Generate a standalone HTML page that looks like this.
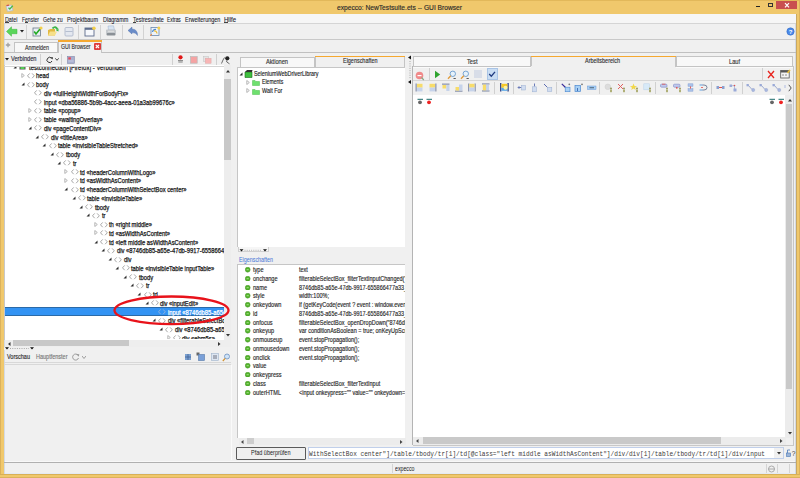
<!DOCTYPE html><html><head><meta charset="utf-8"><style>
html,body{margin:0;padding:0;}
body{width:800px;height:478px;overflow:hidden;position:relative;background:#f0f0f0;font-family:"Liberation Sans",sans-serif;}
div,svg{position:absolute;}
.t{white-space:nowrap;transform-origin:0 50%;}
.clip{overflow:hidden;}
</style></head><body>
<div style="left:0px;top:0px;width:800px;height:478px;background:#f0c86c"></div>
<div style="left:0px;top:0px;width:800px;height:1px;background:#e2b85a"></div>
<div style="left:0px;top:0px;width:1px;height:478px;background:#dcb25c"></div>
<div style="left:799px;top:0px;width:1px;height:478px;background:#dcb25c"></div>
<div style="left:0px;top:477px;width:800px;height:1px;background:#dcb25c"></div>
<div style="left:3.5px;top:14px;width:1px;height:460px;background:#c8a864"></div>
<div style="left:795.5px;top:14px;width:1px;height:460px;background:#c8a864"></div>
<div style="left:4px;top:14px;width:792px;height:460px;background:#d4dae4"></div>
<div style="left:5px;top:14px;width:790px;height:459px;background:#f0f0f0"></div>
<div class="t" style="left:337.00px;top:2.50px;line-height:10px;font-size:7.2px;font-family:'Liberation Sans';font-weight:normal;color:#2a2a2a;transform:scaleX(0.9258);-webkit-text-stroke:0.15px #2a2a2a;">expecco: NewTestsuite.ets -- GUI Browser</div>
<svg style="left:4.5px;top:2.5px" width="10" height="10" viewBox="0 0 10 10"><path d="M1 3 L6.5 2 L8 7.5 L2.5 8.5 Z" fill="#dfe9f3" stroke="#a8b8c8" stroke-width="0.6"/><path d="M1.5 2.6 L4 2.1" stroke="#d05050" stroke-width="1.2"/><path d="M3.5 4.8 L4.8 6 L7.8 2.8" stroke="#48b848" stroke-width="1.3" fill="none"/></svg>
<div style="left:756px;top:5.8px;width:4px;height:1.2px;background:#222"></div>
<div style="left:767.8px;top:3.2px;width:5.2px;height:3.9px;border:0.7px solid #333;border-top-width:1.3px;box-sizing:border-box"></div>
<div style="left:776.4px;top:0.6px;width:20.2px;height:8.8px;background:#c9504f"></div>
<svg style="left:782.5px;top:1.9px" width="8" height="7" viewBox="0 0 8 7"><path d="M2 1.2 L6 5.4 M6 1.2 L2 5.4" stroke="#fff" stroke-width="1.2"/></svg>
<div style="left:4px;top:14px;width:792px;height:9.5px;background:#f6f6f6"></div>
<div style="left:4px;top:23.2px;width:792px;height:1px;background:#d5d5d5"></div>
<div class="t" style="left:5.00px;top:14.60px;line-height:10px;font-size:7.8px;font-family:'Liberation Sans';font-weight:normal;color:#1a1a2a;transform:scaleX(0.6867);-webkit-text-stroke:0.12px #1a1a2a;">Datei</div>
<div class="t" style="left:21.90px;top:14.60px;line-height:10px;font-size:7.8px;font-family:'Liberation Sans';font-weight:normal;color:#1a1a2a;transform:scaleX(0.6430);-webkit-text-stroke:0.12px #1a1a2a;">Fenster</div>
<div class="t" style="left:43.40px;top:14.60px;line-height:10px;font-size:7.8px;font-family:'Liberation Sans';font-weight:normal;color:#1a1a2a;transform:scaleX(0.6648);-webkit-text-stroke:0.12px #1a1a2a;">Gehe zu</div>
<div class="t" style="left:67.00px;top:14.60px;line-height:10px;font-size:7.8px;font-family:'Liberation Sans';font-weight:normal;color:#1a1a2a;transform:scaleX(0.7081);-webkit-text-stroke:0.12px #1a1a2a;">Projektbaum</div>
<div class="t" style="left:102.50px;top:14.60px;line-height:10px;font-size:7.8px;font-family:'Liberation Sans';font-weight:normal;color:#1a1a2a;transform:scaleX(0.7034);-webkit-text-stroke:0.12px #1a1a2a;">Diagramm</div>
<div class="t" style="left:132.60px;top:14.60px;line-height:10px;font-size:7.8px;font-family:'Liberation Sans';font-weight:normal;color:#1a1a2a;transform:scaleX(0.6943);-webkit-text-stroke:0.12px #1a1a2a;">Testresultate</div>
<div class="t" style="left:167.00px;top:14.60px;line-height:10px;font-size:7.8px;font-family:'Liberation Sans';font-weight:normal;color:#1a1a2a;transform:scaleX(0.6242);-webkit-text-stroke:0.12px #1a1a2a;">Extras</div>
<div class="t" style="left:184.80px;top:14.60px;line-height:10px;font-size:7.8px;font-family:'Liberation Sans';font-weight:normal;color:#1a1a2a;transform:scaleX(0.7040);-webkit-text-stroke:0.12px #1a1a2a;">Erweiterungen</div>
<div class="t" style="left:224.00px;top:14.60px;line-height:10px;font-size:7.8px;font-family:'Liberation Sans';font-weight:normal;color:#1a1a2a;transform:scaleX(0.7688);-webkit-text-stroke:0.12px #1a1a2a;">Hilfe</div>
<div style="left:5.2px;top:21.6px;width:3.5px;height:0.7px;background:#444"></div>
<div style="left:25.3px;top:21.6px;width:3px;height:0.7px;background:#444"></div>
<div style="left:132.8px;top:21.6px;width:3.5px;height:0.7px;background:#444"></div>
<div style="left:224.3px;top:21.6px;width:3.8px;height:0.7px;background:#444"></div>
<div style="left:4px;top:39.2px;width:792px;height:1px;background:#c9c9c9"></div>
<div style="left:26.2px;top:25px;width:1px;height:13.5px;background:#d2d2d2"></div>
<div style="left:78.2px;top:25px;width:1px;height:13.5px;background:#d2d2d2"></div>
<div style="left:99.6px;top:25px;width:1px;height:13.5px;background:#d2d2d2"></div>
<div style="left:122.2px;top:25px;width:1px;height:13.5px;background:#d2d2d2"></div>
<div style="left:142.8px;top:25px;width:1px;height:13.5px;background:#d2d2d2"></div>
<svg style="left:6px;top:26px" width="12" height="11" viewBox="0 0 12 11"><path d="M0.5 5.5 L5.5 0.8 L5.5 3.3 L11 3.3 L11 7.7 L5.5 7.7 L5.5 10.2 Z" fill="#5ad65a" stroke="#3cb43c" stroke-width="0.5"/></svg>
<svg style="left:19.5px;top:30px" width="4" height="3" viewBox="0 0 4 3"><path d="M0 0 L4 0 L2 2.5 Z" fill="#222"/></svg>
<svg style="left:32px;top:26px" width="11" height="11" viewBox="0 0 11 11"><rect x="1" y="2" width="7.5" height="8" fill="#e8eef4" stroke="#6b7a8a" stroke-width="0.8"/><path d="M2.2 5.5 L4 8 L8 3" stroke="#22aa22" stroke-width="1.6" fill="none"/><circle cx="9" cy="2" r="1.6" fill="#f3d04a"/></svg>
<svg style="left:47px;top:25px" width="12" height="12" viewBox="0 0 12 12"><path d="M1 5 L3.5 4 L8 4 L8 10.5 L1 10.5 Z" fill="#e2b840"/><path d="M1 10.5 L3 6.5 L10 6.5 L8 10.5 Z" fill="#f6e08a"/><path d="M5.5 3.5 Q8.5 0.5 10.5 4.5" stroke="#3fb54a" stroke-width="1.8" fill="none"/><path d="M9 5.5 L11.5 3.5 L11.5 6.5 Z" fill="#3fb54a"/></svg>
<svg style="left:64px;top:26px" width="10" height="11" viewBox="0 0 10 11"><rect x="1" y="1.5" width="8" height="8.5" rx="1" fill="#e4e8f0" stroke="#aab4c8" stroke-width="0.8"/><path d="M1.5 5.5 H8.5" stroke="#aab4c8" stroke-width="0.8"/></svg>
<svg style="left:84px;top:26px" width="12" height="11" viewBox="0 0 12 11"><rect x="1" y="2" width="9" height="8" fill="#f6f8fc" stroke="#5d6c8c" stroke-width="0.9"/><rect x="1" y="2" width="9" height="1.8" fill="#5d6c8c"/><circle cx="10" cy="2.2" r="1.7" fill="#f3d04a"/></svg>
<svg style="left:105px;top:25px" width="12" height="12" viewBox="0 0 12 12"><path d="M3 1 L8.5 0.8 L9.5 5 L3.5 5 Z" fill="#d8e4f2" stroke="#9ab0cc" stroke-width="0.5"/><path d="M1 5 Q1 4.5 2 4.5 L10 4.5 Q11 4.5 11 6 L11 8.5 L1 8.5 Z" fill="#c4c8cc"/><rect x="1.5" y="8" width="9" height="2.5" rx="1" fill="#8a9096"/><path d="M3 6.3 H9" stroke="#eee" stroke-width="0.7"/></svg>
<svg style="left:127px;top:26px" width="12" height="11" viewBox="0 0 12 11"><path d="M1 4.5 L5 1 L5 3 Q10.5 3 10.5 9.5 Q9 6.5 5 6.5 L5 8 Z" fill="#6a8cc8" stroke="#4a6aa8" stroke-width="0.4"/></svg>
<svg style="left:149px;top:26px" width="12" height="11" viewBox="0 0 12 11"><rect x="2" y="1.5" width="8" height="8" fill="#eef3f8" stroke="#6a88b0" stroke-width="0.8"/><path d="M3.5 6 Q4 3 7 3.5" stroke="#4a8ad0" stroke-width="1.2" fill="none"/><path d="M5 5 Q7.5 4.5 8 7.5" stroke="#e8b830" stroke-width="1.2" fill="none"/><circle cx="9.8" cy="2" r="1.5" fill="#f3d04a"/><path d="M1 9.5 L3 8.5" stroke="#f08030" stroke-width="1"/></svg>
<svg style="left:785.5px;top:26.5px" width="9" height="9" viewBox="0 0 9 9"><circle cx="4.5" cy="4.5" r="3.7" fill="#4a88e8" stroke="#2f68c0" stroke-width="0.5"/><text x="4.5" y="6.9" font-size="6" font-family="Liberation Sans" font-weight="bold" fill="#fff" text-anchor="middle">?</text></svg>
<div style="left:4px;top:52.3px;width:792px;height:1px;background:#c0c0c0"></div>
<svg style="left:5.3px;top:42.3px" width="6" height="6" viewBox="0 0 6 6"><path d="M3 0.8 V5.2 M0.8 3 H5.2" stroke="#a0a0a0" stroke-width="1.3"/></svg>
<div style="left:14px;top:42.2px;width:44px;height:10.2px;background:#f8f8f8;border:1px solid #c4c4c4;border-bottom:none;box-sizing:border-box"></div>
<div class="t" style="left:24.50px;top:42.50px;line-height:10px;font-size:7px;font-family:'Liberation Sans';font-weight:normal;color:#333;transform:scaleX(0.7611);-webkit-text-stroke:0.15px #333;">Anmelden</div>
<div style="left:58px;top:40px;width:43.5px;height:13.3px;background:#f0f0f0;border-left:1px solid #c4c4c4;border-right:1px solid #c4c4c4;box-sizing:border-box"></div>
<div style="left:58px;top:40px;width:43.5px;height:1.5px;background:#f5a830"></div>
<div class="t" style="left:61.00px;top:41.60px;line-height:10px;font-size:7px;font-family:'Liberation Sans';font-weight:normal;color:#333;transform:scaleX(0.7363);-webkit-text-stroke:0.15px #333;">GUI Browser</div>
<div style="left:94px;top:43px;width:6.5px;height:6.5px;background:#dd3b3b;border-radius:1px"></div>
<svg style="left:94px;top:43px" width="7" height="7" viewBox="0 0 7 7"><path d="M1.8 1.8 L5 5 M5 1.8 L1.8 5" stroke="#fff" stroke-width="1.1"/></svg>
<svg style="left:4.5px;top:57.8px" width="4" height="3" viewBox="0 0 4 3"><path d="M0 0 L4 0 L2 2.5 Z" fill="#222"/></svg>
<div class="t" style="left:10.50px;top:54.30px;line-height:10px;font-size:7px;font-family:'Liberation Sans';font-weight:normal;color:#2a2a3a;transform:scaleX(0.8087);-webkit-text-stroke:0.15px #2a2a3a;">Verbinden</div>
<div style="left:40px;top:54px;width:1px;height:10.5px;background:#d0d0d0"></div>
<svg style="left:45.5px;top:55.5px" width="8" height="8" viewBox="0 0 8 8"><path d="M5.6 2.3 A2.6 2.6 0 1 0 6 5" stroke="#333" stroke-width="1" fill="none"/><path d="M4.3 1.2 L7 1.2 L6.6 3.6 Z" fill="#333"/></svg>
<svg style="left:54.5px;top:58px" width="4" height="3" viewBox="0 0 4 3"><path d="M0.3 0.3 L2 2.3 L3.7 0.3" stroke="#333" stroke-width="0.9" fill="none"/></svg>
<div style="left:61px;top:54px;width:1px;height:10.5px;background:#d0d0d0"></div>
<svg style="left:66.8px;top:55.8px" width="8" height="8" viewBox="0 0 8 8"><rect x="0.5" y="0.5" width="6.8" height="6.8" fill="#a8b0d0" stroke="#8088a8" stroke-width="0.6"/><rect x="1.3" y="1.3" width="2.6" height="2.2" fill="#e84858"/><path d="M1.3 5 H6.5" stroke="#dde" stroke-width="0.6"/></svg>
<div style="left:172.3px;top:54px;width:1px;height:10.5px;background:#d0d0d0"></div>
<svg style="left:177px;top:54px" width="8" height="10" viewBox="0 0 8 10"><circle cx="3.5" cy="3.3" r="2.1" fill="#e01818"/><path d="M1 6.6 H6 M1.3 8 H5.7" stroke="#777" stroke-width="0.9"/></svg>
<svg style="left:190px;top:55.5px" width="8" height="8" viewBox="0 0 8 8"><rect x="0.6" y="0.6" width="6.6" height="6.6" fill="#f5a3a3" stroke="#b9b9b9" stroke-width="0.7"/></svg>
<svg style="left:202.5px;top:55.5px" width="9" height="8" viewBox="0 0 9 8"><rect x="0.5" y="0.5" width="5" height="5" fill="#e4e4e4" stroke="#c0c0c0" stroke-width="0.5"/><rect x="2.3" y="2.3" width="5.8" height="5" fill="#f8b5b5" stroke="#d8a0a0" stroke-width="0.4"/></svg>
<div style="left:215.5px;top:54px;width:1px;height:10.5px;background:#d0d0d0"></div>
<svg style="left:219.5px;top:54.5px" width="11" height="10" viewBox="0 0 11 10"><path d="M1.5 8.5 L3 5 L4.5 2.5" stroke="#333" stroke-width="0.7" fill="none"/><circle cx="7.3" cy="3.3" r="2.1" fill="#222"/><path d="M6.5 5.5 L6.8 7 L9.5 8.8" stroke="#333" stroke-width="0.7" fill="none"/></svg>
<div style="left:4px;top:65px;width:227px;height:274.5px;background:#fff;border-left:1px solid #c8c8c8;box-sizing:border-box"></div>
<div style="left:4px;top:65.8px;width:220px;height:1px;background:#d4d4d4"></div>
<div class="clip" style="left:5px;top:66.6px;width:219px;height:272.9px">
<svg style="left:8.2px;top:-1.8999999999999915px" width="4" height="4" viewBox="0 0 4 4"><path d="M3.5 0.5 L3.5 3.5 L0.5 3.5 Z" fill="#333"/></svg>
<svg style="left:14px;top:-2.8999999999999915px" width="7" height="6" viewBox="0 0 7 6"><rect x="0.5" y="0.5" width="6" height="5" fill="#555"/><rect x="1.5" y="2" width="4" height="3" fill="#5c5"/></svg>
<div class="t" style="left:24.00px;top:-4.00px;line-height:10px;font-size:7px;font-family:'Liberation Sans';font-weight:normal;color:#141414;transform:scaleX(0.8580);-webkit-text-stroke:0.25px #141414;">testconnection [Firefox] - Verbunden</div>
<svg style="left:15.5px;top:6.3500000000000085px" width="4" height="5" viewBox="0 0 4 5"><path d="M0.8 0.5 L3.3 2.5 L0.8 4.5 Z" fill="none" stroke="#9a9a9a" stroke-width="0.7"/></svg>
<svg style="left:21.699999999999996px;top:6.250000000000014px" width="8" height="6" viewBox="0 0 8 6"><path d="M2.7 0.4 L0.5 2.8 L2.7 5.2 M5.1 0.4 L7.3 2.8 L5.1 5.2" fill="none" stroke="#8a8a8a" stroke-width="0.75"/></svg>
<div class="t" style="left:31.30px;top:4.75px;line-height:10px;font-size:7px;font-family:'Liberation Sans';font-weight:normal;color:#141414;transform:scaleX(0.8300);-webkit-text-stroke:0.25px #141414;">head</div>
<svg style="left:15.5px;top:15.600000000000009px" width="4" height="4" viewBox="0 0 4 4"><path d="M3.5 0.5 L3.5 3.5 L0.5 3.5 Z" fill="#2a2a2a"/></svg>
<svg style="left:21.699999999999996px;top:15.000000000000014px" width="8" height="6" viewBox="0 0 8 6"><path d="M2.7 0.4 L0.5 2.8 L2.7 5.2 M5.1 0.4 L7.3 2.8 L5.1 5.2" fill="none" stroke="#8a8a8a" stroke-width="0.75"/></svg>
<div class="t" style="left:31.30px;top:13.50px;line-height:10px;font-size:7px;font-family:'Liberation Sans';font-weight:normal;color:#141414;transform:scaleX(0.8300);-webkit-text-stroke:0.25px #141414;">body</div>
<svg style="left:29.0px;top:23.750000000000014px" width="8" height="6" viewBox="0 0 8 6"><path d="M2.7 0.4 L0.5 2.8 L2.7 5.2 M5.1 0.4 L7.3 2.8 L5.1 5.2" fill="none" stroke="#8a8a8a" stroke-width="0.75"/></svg>
<div class="t" style="left:38.60px;top:22.25px;line-height:10px;font-size:7px;font-family:'Liberation Sans';font-weight:normal;color:#141414;transform:scaleX(0.8300);-webkit-text-stroke:0.25px #141414;">div «fullHeightWidthForBodyFix»</div>
<svg style="left:29.0px;top:32.500000000000014px" width="8" height="6" viewBox="0 0 8 6"><path d="M2.7 0.4 L0.5 2.8 L2.7 5.2 M5.1 0.4 L7.3 2.8 L5.1 5.2" fill="none" stroke="#8a8a8a" stroke-width="0.75"/></svg>
<div class="t" style="left:38.60px;top:31.00px;line-height:10px;font-size:7px;font-family:'Liberation Sans';font-weight:normal;color:#141414;transform:scaleX(0.8300);-webkit-text-stroke:0.25px #141414;">input «dba56886-5b9b-4acc-aeea-01a3ab99676c»</div>
<svg style="left:22.799999999999997px;top:41.35000000000001px" width="4" height="5" viewBox="0 0 4 5"><path d="M0.8 0.5 L3.3 2.5 L0.8 4.5 Z" fill="none" stroke="#9a9a9a" stroke-width="0.7"/></svg>
<svg style="left:29.0px;top:41.250000000000014px" width="8" height="6" viewBox="0 0 8 6"><path d="M2.7 0.4 L0.5 2.8 L2.7 5.2 M5.1 0.4 L7.3 2.8 L5.1 5.2" fill="none" stroke="#8a8a8a" stroke-width="0.75"/></svg>
<div class="t" style="left:38.60px;top:39.75px;line-height:10px;font-size:7px;font-family:'Liberation Sans';font-weight:normal;color:#141414;transform:scaleX(0.8300);-webkit-text-stroke:0.25px #141414;">table «popup»</div>
<svg style="left:22.799999999999997px;top:50.10000000000001px" width="4" height="5" viewBox="0 0 4 5"><path d="M0.8 0.5 L3.3 2.5 L0.8 4.5 Z" fill="none" stroke="#9a9a9a" stroke-width="0.7"/></svg>
<svg style="left:29.0px;top:50.000000000000014px" width="8" height="6" viewBox="0 0 8 6"><path d="M2.7 0.4 L0.5 2.8 L2.7 5.2 M5.1 0.4 L7.3 2.8 L5.1 5.2" fill="none" stroke="#8a8a8a" stroke-width="0.75"/></svg>
<div class="t" style="left:38.60px;top:48.50px;line-height:10px;font-size:7px;font-family:'Liberation Sans';font-weight:normal;color:#141414;transform:scaleX(0.8300);-webkit-text-stroke:0.25px #141414;">table «waitingOverlay»</div>
<svg style="left:22.799999999999997px;top:59.35000000000001px" width="4" height="4" viewBox="0 0 4 4"><path d="M3.5 0.5 L3.5 3.5 L0.5 3.5 Z" fill="#2a2a2a"/></svg>
<svg style="left:29.0px;top:58.750000000000014px" width="8" height="6" viewBox="0 0 8 6"><path d="M2.7 0.4 L0.5 2.8 L2.7 5.2 M5.1 0.4 L7.3 2.8 L5.1 5.2" fill="none" stroke="#8a8a8a" stroke-width="0.75"/></svg>
<div class="t" style="left:38.60px;top:57.25px;line-height:10px;font-size:7px;font-family:'Liberation Sans';font-weight:normal;color:#141414;transform:scaleX(0.8300);-webkit-text-stroke:0.25px #141414;">div «pageContentDiv»</div>
<svg style="left:30.099999999999994px;top:68.1px" width="4" height="4" viewBox="0 0 4 4"><path d="M3.5 0.5 L3.5 3.5 L0.5 3.5 Z" fill="#2a2a2a"/></svg>
<svg style="left:36.3px;top:67.5px" width="8" height="6" viewBox="0 0 8 6"><path d="M2.7 0.4 L0.5 2.8 L2.7 5.2 M5.1 0.4 L7.3 2.8 L5.1 5.2" fill="none" stroke="#8a8a8a" stroke-width="0.75"/></svg>
<div class="t" style="left:45.90px;top:66.00px;line-height:10px;font-size:7px;font-family:'Liberation Sans';font-weight:normal;color:#141414;transform:scaleX(0.8300);-webkit-text-stroke:0.25px #141414;">div «titleArea»</div>
<svg style="left:37.4px;top:76.85px" width="4" height="4" viewBox="0 0 4 4"><path d="M3.5 0.5 L3.5 3.5 L0.5 3.5 Z" fill="#2a2a2a"/></svg>
<svg style="left:43.6px;top:76.25px" width="8" height="6" viewBox="0 0 8 6"><path d="M2.7 0.4 L0.5 2.8 L2.7 5.2 M5.1 0.4 L7.3 2.8 L5.1 5.2" fill="none" stroke="#8a8a8a" stroke-width="0.75"/></svg>
<div class="t" style="left:53.20px;top:74.75px;line-height:10px;font-size:7px;font-family:'Liberation Sans';font-weight:normal;color:#141414;transform:scaleX(0.8300);-webkit-text-stroke:0.25px #141414;">table «invisibleTableStretched»</div>
<svg style="left:44.7px;top:85.6px" width="4" height="4" viewBox="0 0 4 4"><path d="M3.5 0.5 L3.5 3.5 L0.5 3.5 Z" fill="#2a2a2a"/></svg>
<svg style="left:50.9px;top:85.0px" width="8" height="6" viewBox="0 0 8 6"><path d="M2.7 0.4 L0.5 2.8 L2.7 5.2 M5.1 0.4 L7.3 2.8 L5.1 5.2" fill="none" stroke="#8a8a8a" stroke-width="0.75"/></svg>
<div class="t" style="left:60.50px;top:83.50px;line-height:10px;font-size:7px;font-family:'Liberation Sans';font-weight:normal;color:#141414;transform:scaleX(0.8300);-webkit-text-stroke:0.25px #141414;">tbody</div>
<svg style="left:52.0px;top:94.35px" width="4" height="4" viewBox="0 0 4 4"><path d="M3.5 0.5 L3.5 3.5 L0.5 3.5 Z" fill="#2a2a2a"/></svg>
<svg style="left:58.199999999999996px;top:93.75px" width="8" height="6" viewBox="0 0 8 6"><path d="M2.7 0.4 L0.5 2.8 L2.7 5.2 M5.1 0.4 L7.3 2.8 L5.1 5.2" fill="none" stroke="#8a8a8a" stroke-width="0.75"/></svg>
<div class="t" style="left:67.80px;top:92.25px;line-height:10px;font-size:7px;font-family:'Liberation Sans';font-weight:normal;color:#141414;transform:scaleX(0.8300);-webkit-text-stroke:0.25px #141414;">tr</div>
<svg style="left:59.3px;top:102.6px" width="4" height="5" viewBox="0 0 4 5"><path d="M0.8 0.5 L3.3 2.5 L0.8 4.5 Z" fill="none" stroke="#9a9a9a" stroke-width="0.7"/></svg>
<svg style="left:65.5px;top:102.5px" width="8" height="6" viewBox="0 0 8 6"><path d="M2.7 0.4 L0.5 2.8 L2.7 5.2 M5.1 0.4 L7.3 2.8 L5.1 5.2" fill="none" stroke="#8a8a8a" stroke-width="0.75"/></svg>
<div class="t" style="left:75.10px;top:101.00px;line-height:10px;font-size:7px;font-family:'Liberation Sans';font-weight:normal;color:#141414;transform:scaleX(0.8300);-webkit-text-stroke:0.25px #141414;">td «headerColumnWithLogo»</div>
<svg style="left:59.3px;top:111.35px" width="4" height="5" viewBox="0 0 4 5"><path d="M0.8 0.5 L3.3 2.5 L0.8 4.5 Z" fill="none" stroke="#9a9a9a" stroke-width="0.7"/></svg>
<svg style="left:65.5px;top:111.25px" width="8" height="6" viewBox="0 0 8 6"><path d="M2.7 0.4 L0.5 2.8 L2.7 5.2 M5.1 0.4 L7.3 2.8 L5.1 5.2" fill="none" stroke="#8a8a8a" stroke-width="0.75"/></svg>
<div class="t" style="left:75.10px;top:109.75px;line-height:10px;font-size:7px;font-family:'Liberation Sans';font-weight:normal;color:#141414;transform:scaleX(0.8300);-webkit-text-stroke:0.25px #141414;">td «asWidthAsContent»</div>
<svg style="left:59.3px;top:120.6px" width="4" height="4" viewBox="0 0 4 4"><path d="M3.5 0.5 L3.5 3.5 L0.5 3.5 Z" fill="#2a2a2a"/></svg>
<svg style="left:65.5px;top:120.0px" width="8" height="6" viewBox="0 0 8 6"><path d="M2.7 0.4 L0.5 2.8 L2.7 5.2 M5.1 0.4 L7.3 2.8 L5.1 5.2" fill="none" stroke="#8a8a8a" stroke-width="0.75"/></svg>
<div class="t" style="left:75.10px;top:118.50px;line-height:10px;font-size:7px;font-family:'Liberation Sans';font-weight:normal;color:#141414;transform:scaleX(0.8300);-webkit-text-stroke:0.25px #141414;">td «headerColumnWithSelectBox center»</div>
<svg style="left:66.6px;top:129.35px" width="4" height="4" viewBox="0 0 4 4"><path d="M3.5 0.5 L3.5 3.5 L0.5 3.5 Z" fill="#2a2a2a"/></svg>
<svg style="left:72.80000000000001px;top:128.75px" width="8" height="6" viewBox="0 0 8 6"><path d="M2.7 0.4 L0.5 2.8 L2.7 5.2 M5.1 0.4 L7.3 2.8 L5.1 5.2" fill="none" stroke="#8a8a8a" stroke-width="0.75"/></svg>
<div class="t" style="left:82.40px;top:127.25px;line-height:10px;font-size:7px;font-family:'Liberation Sans';font-weight:normal;color:#141414;transform:scaleX(0.8300);-webkit-text-stroke:0.25px #141414;">table «invisibleTable»</div>
<svg style="left:73.9px;top:138.1px" width="4" height="4" viewBox="0 0 4 4"><path d="M3.5 0.5 L3.5 3.5 L0.5 3.5 Z" fill="#2a2a2a"/></svg>
<svg style="left:80.10000000000001px;top:137.5px" width="8" height="6" viewBox="0 0 8 6"><path d="M2.7 0.4 L0.5 2.8 L2.7 5.2 M5.1 0.4 L7.3 2.8 L5.1 5.2" fill="none" stroke="#8a8a8a" stroke-width="0.75"/></svg>
<div class="t" style="left:89.70px;top:136.00px;line-height:10px;font-size:7px;font-family:'Liberation Sans';font-weight:normal;color:#141414;transform:scaleX(0.8300);-webkit-text-stroke:0.25px #141414;">tbody</div>
<svg style="left:81.2px;top:146.85px" width="4" height="4" viewBox="0 0 4 4"><path d="M3.5 0.5 L3.5 3.5 L0.5 3.5 Z" fill="#2a2a2a"/></svg>
<svg style="left:87.4px;top:146.25px" width="8" height="6" viewBox="0 0 8 6"><path d="M2.7 0.4 L0.5 2.8 L2.7 5.2 M5.1 0.4 L7.3 2.8 L5.1 5.2" fill="none" stroke="#8a8a8a" stroke-width="0.75"/></svg>
<div class="t" style="left:97.00px;top:144.75px;line-height:10px;font-size:7px;font-family:'Liberation Sans';font-weight:normal;color:#141414;transform:scaleX(0.8300);-webkit-text-stroke:0.25px #141414;">tr</div>
<svg style="left:88.5px;top:155.1px" width="4" height="5" viewBox="0 0 4 5"><path d="M0.8 0.5 L3.3 2.5 L0.8 4.5 Z" fill="none" stroke="#9a9a9a" stroke-width="0.7"/></svg>
<svg style="left:94.7px;top:155.0px" width="8" height="6" viewBox="0 0 8 6"><path d="M2.7 0.4 L0.5 2.8 L2.7 5.2 M5.1 0.4 L7.3 2.8 L5.1 5.2" fill="none" stroke="#8a8a8a" stroke-width="0.75"/></svg>
<div class="t" style="left:104.30px;top:153.50px;line-height:10px;font-size:7px;font-family:'Liberation Sans';font-weight:normal;color:#141414;transform:scaleX(0.8300);-webkit-text-stroke:0.25px #141414;">th «right middle»</div>
<svg style="left:88.5px;top:163.85px" width="4" height="5" viewBox="0 0 4 5"><path d="M0.8 0.5 L3.3 2.5 L0.8 4.5 Z" fill="none" stroke="#9a9a9a" stroke-width="0.7"/></svg>
<svg style="left:94.7px;top:163.75px" width="8" height="6" viewBox="0 0 8 6"><path d="M2.7 0.4 L0.5 2.8 L2.7 5.2 M5.1 0.4 L7.3 2.8 L5.1 5.2" fill="none" stroke="#8a8a8a" stroke-width="0.75"/></svg>
<div class="t" style="left:104.30px;top:162.25px;line-height:10px;font-size:7px;font-family:'Liberation Sans';font-weight:normal;color:#141414;transform:scaleX(0.8300);-webkit-text-stroke:0.25px #141414;">td «asWidthAsContent»</div>
<svg style="left:88.5px;top:173.1px" width="4" height="4" viewBox="0 0 4 4"><path d="M3.5 0.5 L3.5 3.5 L0.5 3.5 Z" fill="#2a2a2a"/></svg>
<svg style="left:94.7px;top:172.5px" width="8" height="6" viewBox="0 0 8 6"><path d="M2.7 0.4 L0.5 2.8 L2.7 5.2 M5.1 0.4 L7.3 2.8 L5.1 5.2" fill="none" stroke="#8a8a8a" stroke-width="0.75"/></svg>
<div class="t" style="left:104.30px;top:171.00px;line-height:10px;font-size:7px;font-family:'Liberation Sans';font-weight:normal;color:#141414;transform:scaleX(0.8300);-webkit-text-stroke:0.25px #141414;">td «left middle asWidthAsContent»</div>
<svg style="left:95.8px;top:181.85px" width="4" height="4" viewBox="0 0 4 4"><path d="M3.5 0.5 L3.5 3.5 L0.5 3.5 Z" fill="#2a2a2a"/></svg>
<svg style="left:102.0px;top:181.25px" width="8" height="6" viewBox="0 0 8 6"><path d="M2.7 0.4 L0.5 2.8 L2.7 5.2 M5.1 0.4 L7.3 2.8 L5.1 5.2" fill="none" stroke="#8a8a8a" stroke-width="0.75"/></svg>
<div class="t" style="left:111.60px;top:179.75px;line-height:10px;font-size:7px;font-family:'Liberation Sans';font-weight:normal;color:#141414;transform:scaleX(0.8300);-webkit-text-stroke:0.25px #141414;">div «8746db85-a65e-47db-9917-655866477a33_filterableSelectBox»</div>
<svg style="left:103.1px;top:190.6px" width="4" height="4" viewBox="0 0 4 4"><path d="M3.5 0.5 L3.5 3.5 L0.5 3.5 Z" fill="#2a2a2a"/></svg>
<svg style="left:109.3px;top:189.99999999999997px" width="8" height="6" viewBox="0 0 8 6"><path d="M2.7 0.4 L0.5 2.8 L2.7 5.2 M5.1 0.4 L7.3 2.8 L5.1 5.2" fill="none" stroke="#8a8a8a" stroke-width="0.75"/></svg>
<div class="t" style="left:118.90px;top:188.50px;line-height:10px;font-size:7px;font-family:'Liberation Sans';font-weight:normal;color:#141414;transform:scaleX(0.8300);-webkit-text-stroke:0.25px #141414;">div</div>
<svg style="left:110.4px;top:199.35px" width="4" height="4" viewBox="0 0 4 4"><path d="M3.5 0.5 L3.5 3.5 L0.5 3.5 Z" fill="#2a2a2a"/></svg>
<svg style="left:116.6px;top:198.74999999999997px" width="8" height="6" viewBox="0 0 8 6"><path d="M2.7 0.4 L0.5 2.8 L2.7 5.2 M5.1 0.4 L7.3 2.8 L5.1 5.2" fill="none" stroke="#8a8a8a" stroke-width="0.75"/></svg>
<div class="t" style="left:126.20px;top:197.25px;line-height:10px;font-size:7px;font-family:'Liberation Sans';font-weight:normal;color:#141414;transform:scaleX(0.8300);-webkit-text-stroke:0.25px #141414;">table «invisibleTable inputTable»</div>
<svg style="left:117.7px;top:208.1px" width="4" height="4" viewBox="0 0 4 4"><path d="M3.5 0.5 L3.5 3.5 L0.5 3.5 Z" fill="#2a2a2a"/></svg>
<svg style="left:123.9px;top:207.49999999999997px" width="8" height="6" viewBox="0 0 8 6"><path d="M2.7 0.4 L0.5 2.8 L2.7 5.2 M5.1 0.4 L7.3 2.8 L5.1 5.2" fill="none" stroke="#8a8a8a" stroke-width="0.75"/></svg>
<div class="t" style="left:133.50px;top:206.00px;line-height:10px;font-size:7px;font-family:'Liberation Sans';font-weight:normal;color:#141414;transform:scaleX(0.8300);-webkit-text-stroke:0.25px #141414;">tbody</div>
<svg style="left:125.0px;top:216.85px" width="4" height="4" viewBox="0 0 4 4"><path d="M3.5 0.5 L3.5 3.5 L0.5 3.5 Z" fill="#2a2a2a"/></svg>
<svg style="left:131.20000000000002px;top:216.24999999999997px" width="8" height="6" viewBox="0 0 8 6"><path d="M2.7 0.4 L0.5 2.8 L2.7 5.2 M5.1 0.4 L7.3 2.8 L5.1 5.2" fill="none" stroke="#8a8a8a" stroke-width="0.75"/></svg>
<div class="t" style="left:140.80px;top:214.75px;line-height:10px;font-size:7px;font-family:'Liberation Sans';font-weight:normal;color:#141414;transform:scaleX(0.8300);-webkit-text-stroke:0.25px #141414;">tr</div>
<svg style="left:132.29999999999998px;top:225.6px" width="4" height="4" viewBox="0 0 4 4"><path d="M3.5 0.5 L3.5 3.5 L0.5 3.5 Z" fill="#2a2a2a"/></svg>
<svg style="left:138.5px;top:224.99999999999997px" width="8" height="6" viewBox="0 0 8 6"><path d="M2.7 0.4 L0.5 2.8 L2.7 5.2 M5.1 0.4 L7.3 2.8 L5.1 5.2" fill="none" stroke="#8a8a8a" stroke-width="0.75"/></svg>
<div class="t" style="left:148.10px;top:223.50px;line-height:10px;font-size:7px;font-family:'Liberation Sans';font-weight:normal;color:#141414;transform:scaleX(0.8300);-webkit-text-stroke:0.25px #141414;">td</div>
<svg style="left:139.6px;top:234.35px" width="4" height="4" viewBox="0 0 4 4"><path d="M3.5 0.5 L3.5 3.5 L0.5 3.5 Z" fill="#2a2a2a"/></svg>
<svg style="left:145.8px;top:233.74999999999997px" width="8" height="6" viewBox="0 0 8 6"><path d="M2.7 0.4 L0.5 2.8 L2.7 5.2 M5.1 0.4 L7.3 2.8 L5.1 5.2" fill="none" stroke="#8a8a8a" stroke-width="0.75"/></svg>
<div class="t" style="left:155.40px;top:232.25px;line-height:10px;font-size:7px;font-family:'Liberation Sans';font-weight:normal;color:#141414;transform:scaleX(0.8300);-webkit-text-stroke:0.25px #141414;">div «inputEdit»</div>
<div style="left:0px;top:240.4px;width:219px;height:9px;background:#3393f3;border-top:1px solid #2b6aa8;border-bottom:1px solid #2b6aa8;box-sizing:border-box"></div>
<svg style="left:153.1px;top:242.49999999999997px" width="8" height="6" viewBox="0 0 8 6"><path d="M2.7 0.4 L0.5 2.8 L2.7 5.2 M5.1 0.4 L7.3 2.8 L5.1 5.2" fill="none" stroke="#a8bcd8" stroke-width="0.75"/></svg>
<div class="t" style="left:162.70px;top:241.00px;line-height:10px;font-size:7px;font-family:'Liberation Sans';font-weight:normal;color:#fff;transform:scaleX(0.8300);-webkit-text-stroke:0.25px #fff;">input «8746db85-a65e-47db»</div>
<svg style="left:146.89999999999998px;top:251.85px" width="4" height="4" viewBox="0 0 4 4"><path d="M3.5 0.5 L3.5 3.5 L0.5 3.5 Z" fill="#2a2a2a"/></svg>
<svg style="left:153.1px;top:251.24999999999997px" width="8" height="6" viewBox="0 0 8 6"><path d="M2.7 0.4 L0.5 2.8 L2.7 5.2 M5.1 0.4 L7.3 2.8 L5.1 5.2" fill="none" stroke="#8a8a8a" stroke-width="0.75"/></svg>
<div class="t" style="left:162.70px;top:249.75px;line-height:10px;font-size:7px;font-family:'Liberation Sans';font-weight:normal;color:#141414;transform:scaleX(0.8300);-webkit-text-stroke:0.25px #141414;">div «filterableSelectBox»</div>
<svg style="left:154.2px;top:260.6px" width="4" height="4" viewBox="0 0 4 4"><path d="M3.5 0.5 L3.5 3.5 L0.5 3.5 Z" fill="#2a2a2a"/></svg>
<svg style="left:160.4px;top:260.0px" width="8" height="6" viewBox="0 0 8 6"><path d="M2.7 0.4 L0.5 2.8 L2.7 5.2 M5.1 0.4 L7.3 2.8 L5.1 5.2" fill="none" stroke="#8a8a8a" stroke-width="0.75"/></svg>
<div class="t" style="left:170.00px;top:258.50px;line-height:10px;font-size:7px;font-family:'Liberation Sans';font-weight:normal;color:#141414;transform:scaleX(0.8300);-webkit-text-stroke:0.25px #141414;">div «8746db85-a65e»</div>
<svg style="left:161.49999999999997px;top:268.85px" width="4" height="5" viewBox="0 0 4 5"><path d="M0.8 0.5 L3.3 2.5 L0.8 4.5 Z" fill="none" stroke="#9a9a9a" stroke-width="0.7"/></svg>
<svg style="left:167.7px;top:268.75px" width="8" height="6" viewBox="0 0 8 6"><path d="M2.7 0.4 L0.5 2.8 L2.7 5.2 M5.1 0.4 L7.3 2.8 L5.1 5.2" fill="none" stroke="#8a8a8a" stroke-width="0.75"/></svg>
<div class="t" style="left:177.30px;top:267.25px;line-height:10px;font-size:7px;font-family:'Liberation Sans';font-weight:normal;color:#141414;transform:scaleX(0.8300);-webkit-text-stroke:0.25px #141414;">div «ehm5s»</div>
</div>
<div style="left:223.5px;top:65px;width:7.5px;height:274.5px;background:#ededed"></div>
<svg style="left:225.5px;top:69.5px" width="4" height="3" viewBox="0 0 4 3"><path d="M0 2.5 L4 2.5 L2 0 Z" fill="#333"/></svg>
<div style="left:224px;top:79.3px;width:7px;height:80.7px;background:#c8c8c8"></div>
<svg style="left:225.5px;top:333.5px" width="4" height="3" viewBox="0 0 4 3"><path d="M0 0 L4 0 L2 2.5 Z" fill="#333"/></svg>
<div style="left:5px;top:339.5px;width:226px;height:7px;background:#eeeeee"></div>
<svg style="left:8px;top:341.5px" width="3" height="4" viewBox="0 0 3 4"><path d="M2.5 0 L2.5 4 L0 2 Z" fill="#333"/></svg>
<div style="left:13px;top:339.8px;width:116px;height:6.4px;background:#c8c8c8"></div>
<svg style="left:218px;top:341.5px" width="3" height="4" viewBox="0 0 3 4"><path d="M0 0 L0 4 L2.5 2 Z" fill="#333"/></svg>
<div style="left:4px;top:346.5px;width:227px;height:3.5px;background:#f0f0f0"></div>
<svg style="left:5px;top:347px" width="31" height="3" viewBox="0 0 31 3"><path d="M0 0.3 L4 0.3 L2 2.5 Z M25 0.3 L29 0.3 L27 2.5 Z" fill="#111"/><path d="M5 1.5 H24" stroke="#888" stroke-width="0.7" stroke-dasharray="1 1.3"/></svg>
<div class="t" style="left:7.00px;top:351.60px;line-height:10px;font-size:7px;font-family:'Liberation Sans';font-weight:normal;color:#2a2a2a;transform:scaleX(0.7880);-webkit-text-stroke:0.15px #2a2a2a;">Vorschau</div>
<div class="t" style="left:35.50px;top:351.60px;line-height:10px;font-size:7px;font-family:'Liberation Sans';font-weight:normal;color:#777;transform:scaleX(0.7857);-webkit-text-stroke:0.15px #777;">Hauptfenster</div>
<svg style="left:72px;top:353px" width="8" height="8" viewBox="0 0 8 8"><path d="M6 2.2 A3 3 0 1 0 6.5 5" stroke="#999" stroke-width="1" fill="none"/><path d="M4.5 1 L7.3 1.2 L6.7 3.8 Z" fill="#999"/></svg>
<svg style="left:81.5px;top:355.5px" width="4" height="3" viewBox="0 0 4 3"><path d="M0 0 L2 2.5 L4 0" stroke="#888" stroke-width="0.8" fill="none"/></svg>
<svg style="left:183.5px;top:353px" width="8" height="8" viewBox="0 0 8 8"><rect x="1" y="1" width="6" height="6" fill="#7ba0d0"/><path d="M4 1 V7 M1 4 H7" stroke="#3a5a90" stroke-width="0.7"/></svg>
<svg style="left:196px;top:352px" width="10" height="10" viewBox="0 0 10 10"><rect x="0.5" y="0.5" width="3" height="3" fill="#666"/><rect x="2.5" y="2.5" width="6" height="6" fill="#7aa0d8" stroke="#5578a8" stroke-width="0.6"/></svg>
<svg style="left:210.5px;top:353px" width="8" height="8" viewBox="0 0 8 8"><rect x="0.5" y="0.5" width="7" height="7" fill="#dde6f2" stroke="#9fb2cc" stroke-width="0.6"/><path d="M3 2 V6 M5 2 V6" stroke="#445" stroke-width="0.7"/></svg>
<svg style="left:222px;top:352.5px" width="9" height="9" viewBox="0 0 9 9"><circle cx="5" cy="3.5" r="2.5" fill="#cfe3f7" stroke="#6a8fc0" stroke-width="0.8"/><path d="M3.2 5.3 L0.8 8" stroke="#d09030" stroke-width="1.2"/></svg>
<div style="left:4px;top:362.2px;width:227px;height:1px;background:#d8d8d8"></div>
<div style="left:4px;top:364.2px;width:227px;height:1px;background:#d8d8d8"></div>
<div style="left:231.3px;top:365px;width:1px;height:95px;background:#fafafa"></div>
<svg style="left:100px;top:285px" width="140" height="50" viewBox="0 0 140 50"><ellipse cx="71.5" cy="25.3" rx="57" ry="13.8" fill="none" stroke="#e8121a" stroke-width="2.3"/></svg>
<div style="left:239.5px;top:57.2px;width:75px;height:9.5px;background:#f8f8f8;border:1px solid #c4c4c4;border-bottom:none;box-sizing:border-box"></div>
<div class="t" style="left:266.00px;top:56.80px;line-height:10px;font-size:7px;font-family:'Liberation Sans';font-weight:normal;color:#333;transform:scaleX(0.8073);-webkit-text-stroke:0.15px #333;">Aktionen</div>
<div style="left:314.5px;top:55.6px;width:90.5px;height:11.5px;background:#f0f0f0;border-left:1px solid #c4c4c4;border-right:1px solid #c4c4c4;box-sizing:border-box"></div>
<div style="left:314.5px;top:55.6px;width:90.5px;height:1.4px;background:#f5a830"></div>
<div class="t" style="left:342.75px;top:56.30px;line-height:10px;font-size:7px;font-family:'Liberation Sans';font-weight:normal;color:#333;transform:scaleX(0.7775);-webkit-text-stroke:0.15px #333;">Eigenschaften</div>
<div style="left:237.2px;top:66.6px;width:167.5px;height:180.2px;background:#fff;border-left:1px solid #c6c6c6;border-top:1px solid #c6c6c6;box-sizing:border-box"></div>
<svg style="left:238.8px;top:71.5px" width="4" height="4" viewBox="0 0 4 4"><path d="M3.5 0.5 L3.5 3.5 L0.5 3.5 Z" fill="#2a2a2a"/></svg>
<svg style="left:244px;top:69px" width="9" height="9" viewBox="0 0 9 9"><path d="M1 3 L8 3 L8 8.5 L1 8.5 Z" fill="#3fbf3f" stroke="#1d6b1d" stroke-width="0.6"/><path d="M1 3 L3 1 L8.5 1 L8 3 Z" fill="#333"/></svg>
<div class="t" style="left:254.00px;top:68.50px;line-height:10px;font-size:7px;font-family:'Liberation Sans';font-weight:normal;color:#222;transform:scaleX(0.7723);-webkit-text-stroke:0.15px #222;">SeleniumWebDriverLibrary</div>
<svg style="left:246px;top:79.5px" width="4" height="5" viewBox="0 0 4 5"><path d="M0.8 0.5 L3.3 2.5 L0.8 4.5 Z" fill="none" stroke="#9a9a9a" stroke-width="0.7"/></svg>
<svg style="left:251.5px;top:79px" width="8" height="7" viewBox="0 0 8 7"><path d="M0.5 1.5 L3 1.5 L4 2.5 L7.5 2.5 L7.5 6.5 L0.5 6.5 Z" fill="#6ee06e" stroke="#4cbc4c" stroke-width="0.5"/></svg>
<div class="t" style="left:261.70px;top:77.00px;line-height:10px;font-size:7px;font-family:'Liberation Sans';font-weight:normal;color:#222;transform:scaleX(0.7298);-webkit-text-stroke:0.15px #222;">Elements</div>
<svg style="left:246px;top:88.25px" width="4" height="5" viewBox="0 0 4 5"><path d="M0.8 0.5 L3.3 2.5 L0.8 4.5 Z" fill="none" stroke="#9a9a9a" stroke-width="0.7"/></svg>
<svg style="left:251.5px;top:87.75px" width="8" height="7" viewBox="0 0 8 7"><path d="M0.5 1.5 L3 1.5 L4 2.5 L7.5 2.5 L7.5 6.5 L0.5 6.5 Z" fill="#6ee06e" stroke="#4cbc4c" stroke-width="0.5"/></svg>
<div class="t" style="left:261.70px;top:85.75px;line-height:10px;font-size:7px;font-family:'Liberation Sans';font-weight:normal;color:#222;transform:scaleX(0.7752);-webkit-text-stroke:0.15px #222;">Wait For</div>
<div style="left:238px;top:247.2px;width:30.5px;height:5.3px;background:#f6f6f6;border:1px solid #d0d0d0;border-top:none;box-sizing:border-box"></div>
<svg style="left:239px;top:248.7px" width="29" height="3" viewBox="0 0 29 3"><path d="M0.5 0.3 L4.5 0.3 L2.5 2.6 Z M24 0.3 L28 0.3 L26 2.6 Z" fill="#111"/><path d="M5.5 1.3 H23" stroke="#999" stroke-width="0.7" stroke-dasharray="1 1.2"/></svg>
<div class="t" style="left:239.00px;top:255.20px;line-height:10px;font-size:7px;font-family:'Liberation Sans';font-weight:normal;color:#4a7ad8;transform:scaleX(0.7662);-webkit-text-stroke:0.05px #4a7ad8;">Eigenschaften</div>
<div style="left:237.2px;top:264.2px;width:168px;height:173.5px;background:#fff;border-left:1px solid #c6c6c6;border-top:1px solid #c6c6c6;box-sizing:border-box"></div>
<div class="clip" style="left:238.5px;top:265px;width:166.5px;height:172px">
<svg style="left:6.800000000000011px;top:2.299999999999977px" width="5.4" height="5.4" viewBox="0 0 5.4 5.4"><circle cx="2.7" cy="2.7" r="2.45" fill="#52b52a" stroke="#3a8a1a" stroke-width="0.5"/><path d="M1.6 2.7 H3.8" stroke="#c8ecb0" stroke-width="0.7"/></svg>
<div class="t" style="left:14.40px;top:0.30px;line-height:10px;font-size:7px;font-family:'Liberation Sans';font-weight:normal;color:#262626;transform:scaleX(0.8000);-webkit-text-stroke:0.15px #262626;">type</div>
<div class="t" style="left:60.50px;top:0.30px;line-height:10px;font-size:7px;font-family:'Liberation Sans';font-weight:normal;color:#262626;transform:scaleX(0.7850);-webkit-text-stroke:0.15px #262626;">text</div>
<svg style="left:6.800000000000011px;top:11.029999999999996px" width="5.4" height="5.4" viewBox="0 0 5.4 5.4"><circle cx="2.7" cy="2.7" r="2.45" fill="#52b52a" stroke="#3a8a1a" stroke-width="0.5"/><path d="M1.6 2.7 H3.8" stroke="#c8ecb0" stroke-width="0.7"/></svg>
<div class="t" style="left:14.40px;top:9.03px;line-height:10px;font-size:7px;font-family:'Liberation Sans';font-weight:normal;color:#262626;transform:scaleX(0.8000);-webkit-text-stroke:0.15px #262626;">onchange</div>
<div class="t" style="left:60.50px;top:9.03px;line-height:10px;font-size:7px;font-family:'Liberation Sans';font-weight:normal;color:#262626;transform:scaleX(0.7850);-webkit-text-stroke:0.15px #262626;">filterableSelectBox_filterTextInputChanged(&quot;8746db85</div>
<svg style="left:6.800000000000011px;top:19.759999999999955px" width="5.4" height="5.4" viewBox="0 0 5.4 5.4"><circle cx="2.7" cy="2.7" r="2.45" fill="#52b52a" stroke="#3a8a1a" stroke-width="0.5"/><path d="M1.6 2.7 H3.8" stroke="#c8ecb0" stroke-width="0.7"/></svg>
<div class="t" style="left:14.40px;top:17.76px;line-height:10px;font-size:7px;font-family:'Liberation Sans';font-weight:normal;color:#262626;transform:scaleX(0.8000);-webkit-text-stroke:0.15px #262626;">name</div>
<div class="t" style="left:60.50px;top:17.76px;line-height:10px;font-size:7px;font-family:'Liberation Sans';font-weight:normal;color:#262626;transform:scaleX(0.7850);-webkit-text-stroke:0.15px #262626;">8746db85-a65e-47db-9917-655866477a33_filterableSelectBox</div>
<svg style="left:6.800000000000011px;top:28.489999999999974px" width="5.4" height="5.4" viewBox="0 0 5.4 5.4"><circle cx="2.7" cy="2.7" r="2.45" fill="#52b52a" stroke="#3a8a1a" stroke-width="0.5"/><path d="M1.6 2.7 H3.8" stroke="#c8ecb0" stroke-width="0.7"/></svg>
<div class="t" style="left:14.40px;top:26.49px;line-height:10px;font-size:7px;font-family:'Liberation Sans';font-weight:normal;color:#262626;transform:scaleX(0.8000);-webkit-text-stroke:0.15px #262626;">style</div>
<div class="t" style="left:60.50px;top:26.49px;line-height:10px;font-size:7px;font-family:'Liberation Sans';font-weight:normal;color:#262626;transform:scaleX(0.7850);-webkit-text-stroke:0.15px #262626;">width:100%;</div>
<svg style="left:6.800000000000011px;top:37.21999999999999px" width="5.4" height="5.4" viewBox="0 0 5.4 5.4"><circle cx="2.7" cy="2.7" r="2.45" fill="#52b52a" stroke="#3a8a1a" stroke-width="0.5"/><path d="M1.6 2.7 H3.8" stroke="#c8ecb0" stroke-width="0.7"/></svg>
<div class="t" style="left:14.40px;top:35.22px;line-height:10px;font-size:7px;font-family:'Liberation Sans';font-weight:normal;color:#262626;transform:scaleX(0.8000);-webkit-text-stroke:0.15px #262626;">onkeydown</div>
<div class="t" style="left:60.50px;top:35.22px;line-height:10px;font-size:7px;font-family:'Liberation Sans';font-weight:normal;color:#262626;transform:scaleX(0.7850);-webkit-text-stroke:0.15px #262626;">if (getKeyCode(event ? event : window.event)</div>
<svg style="left:6.800000000000011px;top:45.94999999999995px" width="5.4" height="5.4" viewBox="0 0 5.4 5.4"><circle cx="2.7" cy="2.7" r="2.45" fill="#52b52a" stroke="#3a8a1a" stroke-width="0.5"/><path d="M1.6 2.7 H3.8" stroke="#c8ecb0" stroke-width="0.7"/></svg>
<div class="t" style="left:14.40px;top:43.95px;line-height:10px;font-size:7px;font-family:'Liberation Sans';font-weight:normal;color:#262626;transform:scaleX(0.8000);-webkit-text-stroke:0.15px #262626;">id</div>
<div class="t" style="left:60.50px;top:43.95px;line-height:10px;font-size:7px;font-family:'Liberation Sans';font-weight:normal;color:#262626;transform:scaleX(0.7850);-webkit-text-stroke:0.15px #262626;">8746db85-a65e-47db-9917-655866477a33_filterableSelectBox</div>
<svg style="left:6.800000000000011px;top:54.67999999999997px" width="5.4" height="5.4" viewBox="0 0 5.4 5.4"><circle cx="2.7" cy="2.7" r="2.45" fill="#52b52a" stroke="#3a8a1a" stroke-width="0.5"/><path d="M1.6 2.7 H3.8" stroke="#c8ecb0" stroke-width="0.7"/></svg>
<div class="t" style="left:14.40px;top:52.68px;line-height:10px;font-size:7px;font-family:'Liberation Sans';font-weight:normal;color:#262626;transform:scaleX(0.8000);-webkit-text-stroke:0.15px #262626;">onfocus</div>
<div class="t" style="left:60.50px;top:52.68px;line-height:10px;font-size:7px;font-family:'Liberation Sans';font-weight:normal;color:#262626;transform:scaleX(0.7850);-webkit-text-stroke:0.15px #262626;">filterableSelectBox_openDropDown(&quot;8746db85-a65e</div>
<svg style="left:6.800000000000011px;top:63.40999999999999px" width="5.4" height="5.4" viewBox="0 0 5.4 5.4"><circle cx="2.7" cy="2.7" r="2.45" fill="#52b52a" stroke="#3a8a1a" stroke-width="0.5"/><path d="M1.6 2.7 H3.8" stroke="#c8ecb0" stroke-width="0.7"/></svg>
<div class="t" style="left:14.40px;top:61.41px;line-height:10px;font-size:7px;font-family:'Liberation Sans';font-weight:normal;color:#262626;transform:scaleX(0.8000);-webkit-text-stroke:0.15px #262626;">onkeyup</div>
<div class="t" style="left:60.50px;top:61.41px;line-height:10px;font-size:7px;font-family:'Liberation Sans';font-weight:normal;color:#262626;transform:scaleX(0.7850);-webkit-text-stroke:0.15px #262626;">var conditionAsBoolean = true; onKeyUpScript</div>
<svg style="left:6.800000000000011px;top:72.14000000000001px" width="5.4" height="5.4" viewBox="0 0 5.4 5.4"><circle cx="2.7" cy="2.7" r="2.45" fill="#52b52a" stroke="#3a8a1a" stroke-width="0.5"/><path d="M1.6 2.7 H3.8" stroke="#c8ecb0" stroke-width="0.7"/></svg>
<div class="t" style="left:14.40px;top:70.14px;line-height:10px;font-size:7px;font-family:'Liberation Sans';font-weight:normal;color:#262626;transform:scaleX(0.8000);-webkit-text-stroke:0.15px #262626;">onmouseup</div>
<div class="t" style="left:60.50px;top:70.14px;line-height:10px;font-size:7px;font-family:'Liberation Sans';font-weight:normal;color:#262626;transform:scaleX(0.7850);-webkit-text-stroke:0.15px #262626;">event.stopPropagation();</div>
<svg style="left:6.800000000000011px;top:80.86999999999998px" width="5.4" height="5.4" viewBox="0 0 5.4 5.4"><circle cx="2.7" cy="2.7" r="2.45" fill="#52b52a" stroke="#3a8a1a" stroke-width="0.5"/><path d="M1.6 2.7 H3.8" stroke="#c8ecb0" stroke-width="0.7"/></svg>
<div class="t" style="left:14.40px;top:78.87px;line-height:10px;font-size:7px;font-family:'Liberation Sans';font-weight:normal;color:#262626;transform:scaleX(0.8000);-webkit-text-stroke:0.15px #262626;">onmousedown</div>
<div class="t" style="left:60.50px;top:78.87px;line-height:10px;font-size:7px;font-family:'Liberation Sans';font-weight:normal;color:#262626;transform:scaleX(0.7850);-webkit-text-stroke:0.15px #262626;">event.stopPropagation();</div>
<svg style="left:6.800000000000011px;top:89.6px" width="5.4" height="5.4" viewBox="0 0 5.4 5.4"><circle cx="2.7" cy="2.7" r="2.45" fill="#52b52a" stroke="#3a8a1a" stroke-width="0.5"/><path d="M1.6 2.7 H3.8" stroke="#c8ecb0" stroke-width="0.7"/></svg>
<div class="t" style="left:14.40px;top:87.60px;line-height:10px;font-size:7px;font-family:'Liberation Sans';font-weight:normal;color:#262626;transform:scaleX(0.8000);-webkit-text-stroke:0.15px #262626;">onclick</div>
<div class="t" style="left:60.50px;top:87.60px;line-height:10px;font-size:7px;font-family:'Liberation Sans';font-weight:normal;color:#262626;transform:scaleX(0.7850);-webkit-text-stroke:0.15px #262626;">event.stopPropagation();</div>
<svg style="left:6.800000000000011px;top:98.32999999999996px" width="5.4" height="5.4" viewBox="0 0 5.4 5.4"><circle cx="2.7" cy="2.7" r="2.45" fill="#52b52a" stroke="#3a8a1a" stroke-width="0.5"/><path d="M1.6 2.7 H3.8" stroke="#c8ecb0" stroke-width="0.7"/></svg>
<div class="t" style="left:14.40px;top:96.33px;line-height:10px;font-size:7px;font-family:'Liberation Sans';font-weight:normal;color:#262626;transform:scaleX(0.8000);-webkit-text-stroke:0.15px #262626;">value</div>
<svg style="left:6.800000000000011px;top:107.05999999999997px" width="5.4" height="5.4" viewBox="0 0 5.4 5.4"><circle cx="2.7" cy="2.7" r="2.45" fill="#52b52a" stroke="#3a8a1a" stroke-width="0.5"/><path d="M1.6 2.7 H3.8" stroke="#c8ecb0" stroke-width="0.7"/></svg>
<div class="t" style="left:14.40px;top:105.06px;line-height:10px;font-size:7px;font-family:'Liberation Sans';font-weight:normal;color:#262626;transform:scaleX(0.8000);-webkit-text-stroke:0.15px #262626;">onkeypress</div>
<svg style="left:6.800000000000011px;top:115.78999999999999px" width="5.4" height="5.4" viewBox="0 0 5.4 5.4"><circle cx="2.7" cy="2.7" r="2.45" fill="#52b52a" stroke="#3a8a1a" stroke-width="0.5"/><path d="M1.6 2.7 H3.8" stroke="#c8ecb0" stroke-width="0.7"/></svg>
<div class="t" style="left:14.40px;top:113.79px;line-height:10px;font-size:7px;font-family:'Liberation Sans';font-weight:normal;color:#262626;transform:scaleX(0.8000);-webkit-text-stroke:0.15px #262626;">class</div>
<div class="t" style="left:60.50px;top:113.79px;line-height:10px;font-size:7px;font-family:'Liberation Sans';font-weight:normal;color:#262626;transform:scaleX(0.7850);-webkit-text-stroke:0.15px #262626;">filterableSelectBox_filterTextInput</div>
<svg style="left:6.800000000000011px;top:124.52000000000001px" width="5.4" height="5.4" viewBox="0 0 5.4 5.4"><circle cx="2.7" cy="2.7" r="2.45" fill="#52b52a" stroke="#3a8a1a" stroke-width="0.5"/><path d="M1.6 2.7 H3.8" stroke="#c8ecb0" stroke-width="0.7"/></svg>
<div class="t" style="left:14.40px;top:122.52px;line-height:10px;font-size:7px;font-family:'Liberation Sans';font-weight:normal;color:#262626;transform:scaleX(0.8000);-webkit-text-stroke:0.15px #262626;">outerHTML</div>
<div class="t" style="left:60.50px;top:122.52px;line-height:10px;font-size:7px;font-family:'Liberation Sans';font-weight:normal;color:#262626;transform:scaleX(0.7850);-webkit-text-stroke:0.15px #262626;">&lt;input onkeypress=&quot;&quot; value=&quot;&quot; onkeydown=&quot;if</div>
</div>
<div style="left:238.5px;top:437.5px;width:167px;height:7.5px;background:#ececec"></div>
<svg style="left:241px;top:439.5px" width="3" height="4" viewBox="0 0 3 4"><path d="M2.5 0 L2.5 4 L0 2 Z" fill="#444"/></svg>
<div style="left:246.5px;top:437.8px;width:7.5px;height:6.5px;background:#cdcdcd"></div>
<svg style="left:400px;top:439.5px" width="3" height="4" viewBox="0 0 3 4"><path d="M0 0 L0 4 L2.5 2 Z" fill="#444"/></svg>
<div style="left:405.2px;top:66px;width:6px;height:372px;background:#f0f0f0"></div>
<svg style="left:406.5px;top:55px" width="5" height="32" viewBox="0 0 5 32"><path d="M4 0.5 L4 4.5 L1 2.5 Z M4 25 L4 29 L1 27 Z" fill="#111"/><path d="M3 6 V24" stroke="#888" stroke-width="0.7" stroke-dasharray="1 1.3"/></svg>
<div style="left:412.3px;top:66px;width:1px;height:379px;background:#b4b4b4"></div>
<div style="left:236px;top:446.5px;width:69.5px;height:13.3px;background:#efefef;border:1px solid #5a5a5a;border-radius:1px;box-sizing:border-box"></div>
<div class="t" style="left:251.05px;top:448.20px;line-height:10px;font-size:7px;font-family:'Liberation Sans';font-weight:normal;color:#222;transform:scaleX(0.7868);-webkit-text-stroke:0px #222;">Pfad überprüfen</div>
<div style="left:413px;top:56.1px;width:117.5px;height:9.5px;background:#f8f8f8;border:1px solid #c4c4c4;border-bottom:none;box-sizing:border-box"></div>
<div class="t" style="left:466.55px;top:56.60px;line-height:10px;font-size:7px;font-family:'Liberation Sans';font-weight:normal;color:#333;transform:scaleX(0.8175);-webkit-text-stroke:0.15px #333;">Test</div>
<div style="left:530.5px;top:55.5px;width:145px;height:12px;background:#f0f0f0;border-left:1px solid #c4c4c4;border-right:1px solid #c4c4c4;box-sizing:border-box"></div>
<div style="left:530.5px;top:55.5px;width:145px;height:1.4px;background:#f5a830"></div>
<div class="t" style="left:585.00px;top:56.00px;line-height:10px;font-size:7px;font-family:'Liberation Sans';font-weight:normal;color:#333;transform:scaleX(0.7821);-webkit-text-stroke:0.15px #333;">Arbeitsbereich</div>
<div style="left:675.5px;top:56.1px;width:117.5px;height:9.5px;background:#f8f8f8;border:1px solid #c4c4c4;border-bottom:none;box-sizing:border-box"></div>
<div class="t" style="left:728.50px;top:56.60px;line-height:10px;font-size:7px;font-family:'Liberation Sans';font-weight:normal;color:#333;transform:scaleX(0.8073);-webkit-text-stroke:0.15px #333;">Lauf</div>
<div style="left:412.5px;top:65.5px;width:381.5px;height:380px;background:#f0f0f0;border-right:1px solid #c6c6c6;box-sizing:border-box"></div>
<div style="left:412.5px;top:65.5px;width:118.5px;height:1px;background:#c4c4c4"></div>
<div style="left:675px;top:65.5px;width:118.5px;height:1px;background:#c4c4c4"></div>
<div style="left:412.5px;top:66.5px;width:118.5px;height:0.8px;background:#fafafa"></div>
<div style="left:676px;top:66.5px;width:117px;height:0.8px;background:#fafafa"></div>
<div style="left:413px;top:80.3px;width:380px;height:1px;background:#d6d6d6"></div>
<div style="left:429px;top:68px;width:1px;height:12px;background:#d0d0d0"></div>
<div style="left:761.5px;top:68px;width:1px;height:12px;background:#d0d0d0"></div>
<svg style="left:415px;top:71px" width="10" height="10" viewBox="0 0 10 10"><circle cx="4.5" cy="4.5" r="3.8" fill="#f08a8a"/><rect x="2.5" y="4" width="4" height="1.2" fill="#fff"/><path d="M6.5 6.5 L8.8 9" stroke="#8a8" stroke-width="1.2"/></svg>
<svg style="left:434px;top:69.5px" width="7" height="9" viewBox="0 0 7 9"><path d="M1 0.8 L6.2 4.5 L1 8.2 Z" fill="#2ea32e"/></svg>
<svg style="left:447px;top:69.5px" width="10" height="10" viewBox="0 0 10 10"><circle cx="5.8" cy="3.8" r="2.7" fill="#e6f2fb" stroke="#5a90c8" stroke-width="0.8"/><path d="M3.8 5.8 L1 8.8" stroke="#e09a3a" stroke-width="1.3"/><path d="M6.5 8.5 H8.8" stroke="#333" stroke-width="0.8"/></svg>
<svg style="left:460px;top:69.5px" width="10" height="10" viewBox="0 0 10 10"><circle cx="5.8" cy="3.8" r="2.7" fill="#e6f2fb" stroke="#5a90c8" stroke-width="0.8"/><path d="M3.8 5.8 L1 8.8" stroke="#e09a3a" stroke-width="1.3"/><path d="M6.5 8.5 H8.8" stroke="#333" stroke-width="0.8"/></svg>
<div style="left:474px;top:69.5px;width:8px;height:8px;background:#d8dde8"></div>
<div style="left:486.5px;top:68.3px;width:11px;height:11.3px;background:#c9ddf3;border:1px solid #a9c4e6;box-sizing:border-box"></div>
<svg style="left:488px;top:70px" width="8" height="8" viewBox="0 0 8 8"><path d="M1.2 4 L3.3 6.2 L7 1.8" stroke="#1f3a80" stroke-width="1.3" fill="none"/></svg>
<svg style="left:767px;top:70px" width="8" height="9" viewBox="0 0 8 9"><path d="M1 1 L7 8 M7 1 L1 8" stroke="#e8241e" stroke-width="1.3"/></svg>
<svg style="left:780px;top:69px" width="11" height="10" viewBox="0 0 11 10"><rect x="0.7" y="1.5" width="8.5" height="7.5" fill="#f4f4f4" stroke="#555" stroke-width="0.8"/><rect x="0.7" y="1.5" width="8.5" height="2" fill="#555"/><path d="M2 6 H4 M5 6 H7" stroke="#777" stroke-width="0.8"/><path d="M7.5 4 L10 1" stroke="#e8c040" stroke-width="1.6"/></svg>
<div style="left:413px;top:94.5px;width:380px;height:1px;background:#cfcfcf"></div>
<div style="left:494.2px;top:81.5px;width:1px;height:12.5px;background:#d0d0d0"></div>
<div style="left:512.5px;top:81.5px;width:1px;height:12.5px;background:#d0d0d0"></div>
<div style="left:556px;top:81.5px;width:1px;height:12.5px;background:#d0d0d0"></div>
<div style="left:599.4px;top:81.5px;width:1px;height:12.5px;background:#d0d0d0"></div>
<div style="left:654.8px;top:81.5px;width:1px;height:12.5px;background:#d0d0d0"></div>
<div style="left:711.4px;top:81.5px;width:1px;height:12.5px;background:#d0d0d0"></div>
<div style="left:742px;top:81.5px;width:1px;height:12.5px;background:#d0d0d0"></div>
<svg style="left:415.2px;top:83.2px" width="8" height="9" viewBox="0 0 8 9"><rect x="0.5" y="0.5" width="1.3" height="8" fill="#8f98b0"/><rect x="2" y="0.8" width="5.5" height="3.8" fill="#f7dc6a"/><rect x="2" y="4.6" width="5.5" height="3.8" fill="#c6d3ea"/></svg>
<svg style="left:429.2px;top:83.2px" width="8" height="9" viewBox="0 0 8 9"><rect x="6.2" y="0.5" width="1.3" height="8" fill="#8f98b0"/><rect x="0.5" y="0.8" width="5.5" height="3.8" fill="#f7dc6a"/><rect x="0.5" y="4.6" width="5.5" height="3.8" fill="#c6d3ea"/></svg>
<svg style="left:441.7px;top:83.2px" width="8" height="9" viewBox="0 0 8 9"><rect x="0" y="0.5" width="7.5" height="1.3" fill="#8f98b0"/><rect x="0.5" y="2" width="3.8" height="3.5" fill="#f7dc6a"/><rect x="4.3" y="2" width="3.2" height="6" fill="#c6d3ea"/></svg>
<svg style="left:454.7px;top:83.2px" width="8" height="9" viewBox="0 0 8 9"><rect x="0" y="7.5" width="7.5" height="1.3" fill="#8f98b0"/><rect x="0.5" y="4" width="3.5" height="3.5" fill="#f7dc6a"/><rect x="4" y="1.5" width="3.5" height="6" fill="#c6d3ea"/></svg>
<svg style="left:468.2px;top:83.2px" width="8" height="9" viewBox="0 0 8 9"><rect x="0" y="0.5" width="1.3" height="8" fill="#8f98b0"/><rect x="6.5" y="0.5" width="1.3" height="8" fill="#8f98b0"/><rect x="1.3" y="0.8" width="5.2" height="3.8" fill="#f7dc6a"/><rect x="1.3" y="4.6" width="5.2" height="3.8" fill="#c6d3ea"/></svg>
<svg style="left:481.9px;top:83.2px" width="8" height="9" viewBox="0 0 8 9"><rect x="0" y="0.3" width="7.5" height="1.3" fill="#8f98b0"/><rect x="0" y="7.3" width="7.5" height="1.3" fill="#8f98b0"/><rect x="0.8" y="1.6" width="3.2" height="5.7" fill="#f7dc6a"/><rect x="4" y="1.6" width="3" height="5.7" fill="#c6d3ea"/></svg>
<svg style="left:500px;top:83.3px" width="9" height="9" viewBox="0 0 9 9"><rect x="0" y="0" width="1.4" height="8.5" fill="#3a4a88"/><rect x="7.4" y="0" width="1.4" height="8.5" fill="#3a4a88"/><rect x="1.4" y="0.8" width="6" height="4" fill="#f6c828"/><rect x="1.4" y="4.8" width="6" height="3" fill="#5aa8e8"/><circle cx="5.5" cy="4.8" r="2" fill="#fff3a0"/></svg>
<svg style="left:516.5px;top:83px" width="10" height="10" viewBox="0 0 10 10"><path d="M1 4.5 H4.5" stroke="#6a7ab8" stroke-width="1"/><path d="M2.5 3 L1 4.5 L2.5 6" stroke="#6a7ab8" stroke-width="0.8" fill="none"/><rect x="4.5" y="2.5" width="4" height="4.5" fill="#d0dcf0" stroke="#9aaed0" stroke-width="0.5"/></svg>
<svg style="left:529.5px;top:83px" width="10" height="10" viewBox="0 0 10 10"><path d="M4.5 0.5 V3.5" stroke="#6a7ab8" stroke-width="1"/><rect x="2.5" y="3.8" width="4" height="5" fill="#d0dcf0" stroke="#9aaed0" stroke-width="0.5"/></svg>
<svg style="left:542.5px;top:83px" width="10" height="10" viewBox="0 0 10 10"><path d="M1 1 L4.5 4.5" stroke="#5a6ab0" stroke-width="1"/><rect x="4.3" y="4.3" width="4.5" height="4.2" fill="#d0dcf0" stroke="#9aaed0" stroke-width="0.5"/></svg>
<svg style="left:560.5px;top:83px" width="10" height="10" viewBox="0 0 10 10"><path d="M0.8 0.8 L4.5 4.5" stroke="#3a2a98" stroke-width="1.2"/><rect x="4.2" y="4.2" width="4.8" height="4.5" fill="#a8d0f4" stroke="#4a88d0" stroke-width="0.6"/><circle cx="8.3" cy="1.3" r="0.9" fill="#777"/></svg>
<svg style="left:573.5px;top:83px" width="10" height="10" viewBox="0 0 10 10"><rect x="1" y="2.5" width="5.5" height="6" fill="#a8d0f4" stroke="#4a88d0" stroke-width="0.7"/><path d="M3.5 5 V8" stroke="#2a58a8" stroke-width="0.8"/><circle cx="8" cy="1.3" r="0.9" fill="#777"/></svg>
<svg style="left:586.5px;top:83px" width="10" height="10" viewBox="0 0 10 10"><rect x="0.5" y="3" width="8.5" height="3.5" fill="#a8d0f4" stroke="#6a98d8" stroke-width="0.5"/><path d="M2.5 4.75 H7" stroke="#345" stroke-width="0.8"/></svg>
<svg style="left:603.5px;top:83px" width="10" height="10" viewBox="0 0 10 10"><circle cx="3.8" cy="3.8" r="2.8" fill="#dcdcdc" stroke="#c8c8c8" stroke-width="0.4"/><circle cx="7" cy="5.6" r="1" fill="#9a9a60"/><rect x="6" y="6.6" width="2" height="2.6" fill="#b0b078"/></svg>
<svg style="left:616.5px;top:83px" width="10" height="10" viewBox="0 0 10 10"><path d="M1 1 L6 6 M6 1 L1 6" stroke="#e06060" stroke-width="1"/><circle cx="7" cy="5.6" r="1" fill="#9a9a60"/><rect x="6" y="6.6" width="2" height="2.6" fill="#b0b078"/></svg>
<svg style="left:629.5px;top:83px" width="10" height="10" viewBox="0 0 10 10"><path d="M3.5 0.5 L4.5 3 L7 3.2 L5 4.8 L5.8 7 L3.5 5.6 L1.2 7 L2 4.8 L0 3.2 L2.5 3 Z" fill="#f2d84a"/><circle cx="7" cy="5.6" r="1" fill="#9a9a60"/><rect x="6" y="6.6" width="2" height="2.6" fill="#b0b078"/></svg>
<svg style="left:643.1px;top:83px" width="10" height="10" viewBox="0 0 10 10"><rect x="0.8" y="0.8" width="5.5" height="6" fill="#d8eaf8" stroke="#b8d0e8" stroke-width="0.5"/><circle cx="7" cy="5.6" r="1" fill="#9a9a60"/><rect x="6" y="6.6" width="2" height="2.6" fill="#b0b078"/></svg>
<svg style="left:659.5px;top:83px" width="10" height="10" viewBox="0 0 10 10"><rect x="0.5" y="1.2" width="6.5" height="3" rx="1" fill="#c0c8ec" stroke="#7a88c8" stroke-width="0.6"/><path d="M2 1.2 H5.5" stroke="#e05050" stroke-width="0.8"/><circle cx="7" cy="5.6" r="1" fill="#9a9a60"/><rect x="6" y="6.6" width="2" height="2.6" fill="#b0b078"/></svg>
<svg style="left:672.5px;top:83px" width="10" height="10" viewBox="0 0 10 10"><rect x="0.5" y="1.2" width="6.5" height="3" rx="1" fill="#c0c8ec" stroke="#7a88c8" stroke-width="0.6"/><circle cx="3.8" cy="4.8" r="0.9" fill="#e05050"/><circle cx="7" cy="5.6" r="1" fill="#9a9a60"/><rect x="6" y="6.6" width="2" height="2.6" fill="#b0b078"/></svg>
<svg style="left:685.5px;top:83px" width="10" height="10" viewBox="0 0 10 10"><rect x="2" y="0.8" width="5" height="2.6" fill="#a8c0e8" stroke="#7a98d0" stroke-width="0.4"/><rect x="2" y="5.6" width="5" height="2.6" fill="#a8c0e8" stroke="#7a98d0" stroke-width="0.4"/><path d="M4.5 3.4 V5.6" stroke="#e05050" stroke-width="0.9"/></svg>
<svg style="left:698.5px;top:83px" width="10" height="10" viewBox="0 0 10 10"><path d="M1 2 H5 Q8 2 8 4.5 Q8 7 5 7 H1" stroke="#5a6a88" stroke-width="0.8" fill="none"/><rect x="0.5" y="1" width="3" height="2" fill="#a8c8e8"/><rect x="0.5" y="6" width="3" height="2" fill="#a8c8e8"/><path d="M2 4.5 H4" stroke="#e05050" stroke-width="0.8"/></svg>
<svg style="left:715.5px;top:83px" width="10" height="10" viewBox="0 0 10 10"><rect x="0.5" y="3" width="2.5" height="3" fill="#8aa0d0"/><rect x="6" y="3" width="2.5" height="3" fill="#8aa0d0"/><path d="M3 4.5 H6" stroke="#e05050" stroke-width="1"/></svg>
<svg style="left:728.5px;top:83px" width="10" height="10" viewBox="0 0 10 10"><rect x="0.5" y="1.5" width="2.5" height="2.5" fill="#9aaad8"/><path d="M3 2.7 H5.5 V6" stroke="#8a9ac8" stroke-width="0.6" fill="none"/><rect x="4.5" y="5.5" width="3" height="3" fill="#9aaad8"/><circle cx="5.5" cy="2.5" r="0.8" fill="#e05050"/></svg>
<svg style="left:745.5px;top:83px" width="10" height="10" viewBox="0 0 10 10"><rect x="0.5" y="1" width="2.3" height="2.3" fill="#9aaad8"/><path d="M2.5 2.5 L6 6.5" stroke="#8a9ac8" stroke-width="0.8"/><rect x="5.8" y="5.5" width="2.8" height="3" rx="1" fill="#a8b8e0" stroke="#8898c8" stroke-width="0.4"/></svg>
<svg style="left:758.5px;top:83px" width="10" height="10" viewBox="0 0 10 10"><rect x="0.5" y="1" width="2.3" height="2.3" fill="#9aaad8"/><path d="M2.5 2.5 L6 6.5" stroke="#8a9ac8" stroke-width="0.8"/><rect x="5.8" y="5.5" width="2.8" height="3" rx="1" fill="#a8b8e0" stroke="#8898c8" stroke-width="0.4"/></svg>
<svg style="left:771.5px;top:83px" width="10" height="10" viewBox="0 0 10 10"><rect x="0.5" y="1" width="2.3" height="2.3" fill="#9aaad8"/><path d="M2.5 2.5 L6 6.5" stroke="#8a9ac8" stroke-width="0.8"/><rect x="5.8" y="5.5" width="2.8" height="3" rx="1" fill="#a8b8e0" stroke="#8898c8" stroke-width="0.4"/></svg>
<svg style="left:783.5px;top:83px" width="10" height="10" viewBox="0 0 10 10"><rect x="0.5" y="2" width="1" height="3" fill="#b0bce0"/></svg>
<svg style="left:787.5px;top:84px" width="4" height="8" viewBox="0 0 4 8"><path d="M0.8 0.8 L3.2 4 L0.8 7.2" stroke="#444" stroke-width="0.9" fill="none"/></svg>
<div style="left:413px;top:95px;width:373px;height:342.5px;background:#fff"></div>
<svg style="left:417px;top:97.5px" width="9" height="7" viewBox="0 0 9 7"><path d="M0.5 1.3 H6" stroke="#1b6b6b" stroke-width="1"/><circle cx="3" cy="4.3" r="1.9" fill="#666"/></svg>
<svg style="left:426px;top:97.5px" width="9" height="7" viewBox="0 0 9 7"><path d="M0.5 1.3 H6" stroke="#1b6b6b" stroke-width="1"/><circle cx="3" cy="4.3" r="1.9" fill="#e22"/></svg>
<svg style="left:769px;top:97.5px" width="9" height="7" viewBox="0 0 9 7"><path d="M0.5 1.3 H6" stroke="#1b6b6b" stroke-width="1"/><circle cx="3" cy="4.3" r="1.9" fill="#666"/></svg>
<svg style="left:778px;top:97.5px" width="9" height="7" viewBox="0 0 9 7"><path d="M0.5 1.3 H6" stroke="#1b6b6b" stroke-width="1"/><circle cx="3" cy="4.3" r="1.9" fill="#e22"/></svg>
<div style="left:785.3px;top:95px;width:8.2px;height:342.5px;background:#ececec"></div>
<svg style="left:787.5px;top:98.8px" width="4" height="3" viewBox="0 0 4 3"><path d="M0 2.5 L4 2.5 L2 0 Z" fill="#333"/></svg>
<div style="left:785.5px;top:103.8px;width:6.8px;height:285px;background:#c9c9c9"></div>
<svg style="left:787.5px;top:431.5px" width="4" height="3" viewBox="0 0 4 3"><path d="M0 0 L4 0 L2 2.5 Z" fill="#333"/></svg>
<div style="left:413px;top:437px;width:373px;height:7.5px;background:#ececec"></div>
<svg style="left:416px;top:439px" width="3" height="4" viewBox="0 0 3 4"><path d="M2.5 0 L2.5 4 L0 2 Z" fill="#444"/></svg>
<div style="left:422.5px;top:437.2px;width:298.5px;height:6.5px;background:#c9c9c9"></div>
<svg style="left:780px;top:439px" width="3" height="4" viewBox="0 0 3 4"><path d="M0 0 L0 4 L2.5 2 Z" fill="#444"/></svg>
<div style="left:413px;top:444.5px;width:381px;height:1px;background:#c8c8c8"></div>
<div style="left:307.5px;top:446.5px;width:476.5px;height:12.5px;background:#fff;border:1px solid #c0cfea;box-sizing:border-box"></div>
<div class="t" style="left:309.20px;top:449.00px;line-height:10px;font-size:6.8px;font-family:'Liberation Mono';font-weight:normal;color:#3a3a3a;transform:scaleX(0.9016);-webkit-text-stroke:0px #333;">WithSelectBox center&quot;]/table/tbody/tr[1]/td[@class=&quot;left middle asWidthAsContent&quot;]/div/div[1]/table/tbody/tr/td[1]/div/input</div>
<div style="left:774px;top:447.5px;width:9px;height:10.5px;background:#f0f0f0"></div>
<svg style="left:776.5px;top:451.5px" width="4" height="3" viewBox="0 0 4 3"><path d="M0 0 L4 0 L2 2.5 Z" fill="#333"/></svg>
<svg style="left:785.5px;top:448px" width="10" height="10" viewBox="0 0 10 10"><rect x="0.5" y="5" width="4" height="3.5" fill="#9ab4d8" stroke="#4a78b8" stroke-width="0.6"/><path d="M1.5 2 V5 M1.5 2 H4" stroke="#4a78b8" stroke-width="0.8"/><text x="7.5" y="8" font-size="6.5" font-family="Liberation Sans" fill="#333" text-anchor="middle">?</text></svg>
<div style="left:5px;top:460.5px;width:790px;height:1.2px;background:#f8f8f8"></div>
<div style="left:4px;top:461.8px;width:792px;height:1px;background:#b0b0b0"></div>
<div style="left:5px;top:462.8px;width:790px;height:10.5px;background:#f0f0f0"></div>
<div style="left:392px;top:463.5px;width:1px;height:10px;background:#d4d4d4"></div>
<div class="t" style="left:395.00px;top:464.10px;line-height:10px;font-size:7px;font-family:'Liberation Sans';font-weight:normal;color:#222;transform:scaleX(0.7478);-webkit-text-stroke:0px #222;">expecco</div>
<div style="left:765.6px;top:463.5px;width:1px;height:10px;background:#d4d4d4"></div>
<div style="left:776.9px;top:463.5px;width:1px;height:10px;background:#d4d4d4"></div>
<div style="left:788.6px;top:463.5px;width:1px;height:10px;background:#d4d4d4"></div>
<svg style="left:766.5px;top:464.5px" width="9" height="8" viewBox="0 0 9 8"><circle cx="4.5" cy="4" r="3" fill="none" stroke="#999" stroke-width="0.8"/><path d="M1.5 4 H7.5" stroke="#999" stroke-width="0.8"/></svg>
<div style="left:5px;top:473.3px;width:790px;height:0.8px;background:#e4eaf4"></div>
<div style="left:0px;top:474px;width:800px;height:4px;background:#f0c86c"></div>
<div style="left:0px;top:474px;width:800px;height:0.8px;background:#d8b058"></div>
<div style="left:0px;top:477px;width:800px;height:1px;background:#dcb25c"></div>
</body></html>
